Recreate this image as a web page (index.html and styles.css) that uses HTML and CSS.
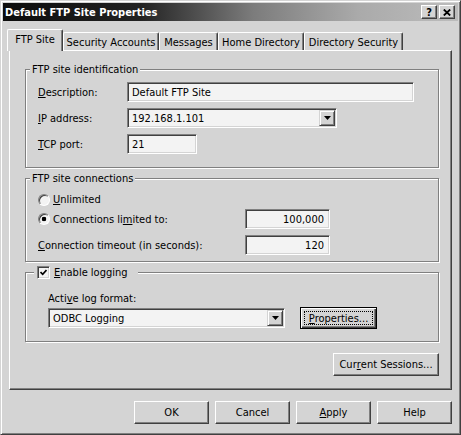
FILE: index.html
```html
<!DOCTYPE html>
<html lang="en">
<head>
    <meta charset="UTF-8">
    <title>Default FTP Site Properties</title>
    <link rel="stylesheet" href="styles.css">
</head>
<body>
    <div class="window">
        <div class="titlebar">
            <span class="title">Default FTP Site Properties</span>
            <div class="caption-buttons">
                <span class="cap-btn">?</span>
                <span class="cap-btn">
                    <svg width="8" height="7" viewBox="0 0 8 7"><path d="M0.8 0.5 L7.2 6.5 M7.2 0.5 L0.8 6.5" stroke="#000" stroke-width="1.8" fill="none"/></svg>
                </span>
            </div>
        </div>

        <div class="tabs">
            <div class="tab active tab-ftp">FTP Site</div>
            <div class="tab tab-sec">Security Accounts</div>
            <div class="tab tab-msg">Messages</div>
            <div class="tab tab-home">Home Directory</div>
            <div class="tab tab-dir">Directory Security</div>
        </div>

        <div class="panel">
            <div class="group group-ident">
                <div class="group-title">FTP site identification</div>
                <div class="rows">
                    <div class="row">
                        <span class="lbl"><u>D</u>escription:</span>
                        <div class="field w-desc">Default FTP Site</div>
                    </div>
                    <div class="row">
                        <span class="lbl"><u>I</u>P address:</span>
                        <div class="field select w-ip">
                            <span class="select-text">192.168.1.101</span>
                            <span class="drop-btn"><svg width="7" height="4" viewBox="0 0 7 4"><path d="M0 0 H7 L3.5 4 Z" fill="#000"/></svg></span>
                        </div>
                    </div>
                    <div class="row">
                        <span class="lbl"><u>T</u>CP port:</span>
                        <div class="field w-port">21</div>
                    </div>
                </div>
            </div>

            <div class="group group-conn">
                <div class="group-title">FTP site connections</div>
                <div class="conn-grid">
                    <div class="option option-first">
                        <span class="radio"></span>
                        <span><u>U</u>nlimited</span>
                    </div>
                    <div></div>
                    <div class="option">
                        <span class="radio checked"></span>
                        <span>Connections li<u>m</u>ited to:</span>
                    </div>
                    <div class="field num">100,000</div>
                    <div class="option option-last"><span><u>C</u>onnection timeout (in seconds):</span></div>
                    <div class="field num option-last">120</div>
                </div>
            </div>

            <div class="group group-log">
                <div class="group-title log-title">
                    <span class="checkbox">
                        <svg width="7" height="7" viewBox="0 0 7 7"><path d="M0.5 3 L2.7 5.3 L6.5 1" stroke="#000" stroke-width="1.7" fill="none"/></svg>
                    </span>
                    <span><u>E</u>nable logging</span>
                </div>
                <div class="log-body">
                    <div class="log-label">Acti<u>v</u>e log format:</div>
                    <div class="log-row">
                        <div class="field select w-log">
                            <span class="select-text">ODBC Logging</span>
                            <span class="drop-btn"><svg width="7" height="4" viewBox="0 0 7 4"><path d="M0 0 H7 L3.5 4 Z" fill="#000"/></svg></span>
                        </div>
                        <button class="btn btn-default btn-props"><span class="focus"><u>P</u>roperties...</span></button>
                    </div>
                </div>
            </div>

            <div class="sessions">
                <button class="btn btn-sessions">Cur<u>r</u>ent Sessions...</button>
            </div>
        </div>

        <div class="footer">
            <button class="btn btn-foot">OK</button>
            <button class="btn btn-foot">Cancel</button>
            <button class="btn btn-foot"><u>A</u>pply</button>
            <button class="btn btn-foot">Help</button>
        </div>
    </div>
</body>
</html>
```

FILE: styles.css
```css
* {
    margin: 0;
    padding: 0;
    box-sizing: border-box;
}

body {
    font-family: "DejaVu Sans Condensed", "DejaVu Sans", sans-serif;
    font-stretch: condensed;
    font-size: 11px;
    line-height: 13px;
    color: #000;
    background-color: #d4d4d4;
}

u {
    text-underline-offset: 1px;
}

.window {
    width: 461px;
    height: 435px;
    display: flex;
    flex-direction: column;
    background-color: #d4d4d4;
    border: 1px solid;
    border-color: #d4d4d4 #404040 #404040 #d4d4d4;
    box-shadow: inset 1px 1px 0 #fff, inset -1px -1px 0 #808080;
    padding: 2px;
}

/* title bar */
.titlebar {
    height: 18px;
    display: flex;
    align-items: center;
    justify-content: space-between;
    padding: 0 3px 0 2px;
    background: linear-gradient(to right, #0c0c0c 0%, #222 30%, #7c7c7c 55%, #aaa 78%, #bcbcbc 100%);
}

.title {
    color: #fff;
    font-weight: bold;
}

.caption-buttons {
    display: flex;
    gap: 2px;
}

.cap-btn {
    width: 16px;
    height: 14px;
    display: flex;
    align-items: center;
    justify-content: center;
    background-color: #d4d4d4;
    border: 1px solid;
    border-color: #fff #404040 #404040 #fff;
    box-shadow: inset -1px -1px 0 #808080;
    font-weight: bold;
    font-size: 11px;
}

/* tabs */
.tabs {
    height: 21px;
    margin-top: 8px;
    padding-left: 4px;
    display: flex;
    align-items: flex-end;
}

.tab {
    height: 18px;
    padding-top: 3px;
    text-align: center;
    white-space: nowrap;
    background-color: #d4d4d4;
    border-top: 1px solid #fff;
    border-left: 1px solid #fff;
    border-right: 1px solid #404040;
    box-shadow: inset -1px 0 0 #808080;
    border-radius: 2px 2px 0 0;
}

.tab.active {
    height: 22px;
    margin-bottom: -1px;
    position: relative;
    z-index: 1;
}

.tab-ftp { width: 56px; }
.tab-sec { width: 96px; }
.tab-msg { width: 59px; }
.tab-home { width: 86px; }
.tab-dir { width: 99px; }

/* tab page */
.panel {
    height: 340px;
    margin: 0 6px;
    padding: 18px 12px 0 15px;
    border: 1px solid;
    border-color: #fff #404040 #404040 #fff;
    box-shadow: inset -1px -1px 0 #808080;
}

.group {
    border: 1px solid #808080;
    box-shadow: inset 1px 1px 0 #fff, 1px 1px 0 #fff;
    padding: 0 10px 0 4px;
}

.group-title {
    display: flex;
    align-items: center;
    width: fit-content;
    height: 13px;
    margin-top: -7px;
    padding: 0 2px;
    background-color: #d4d4d4;
}

.group-ident {
    padding-bottom: 13px;
}

.rows {
    margin-top: 6px;
    padding-left: 8px;
    display: flex;
    flex-direction: column;
    gap: 6px;
}

.row {
    display: flex;
    align-items: center;
}

.lbl {
    width: 89px;
}

/* sunken edit fields */
.field {
    height: 20px;
    display: flex;
    align-items: center;
    padding: 1px 4px;
    background-color: #f3f3f3;
    border: 1px solid;
    border-color: #808080 #fff #fff #808080;
    box-shadow: inset 1px 1px 0 #404040, inset -1px -1px 0 #d4d4d4;
    white-space: nowrap;
}

.w-desc { width: 287px; }
.w-ip { width: 210px; }
.w-port { width: 70px; }
.w-log { width: 237px; }

.field.num {
    width: 85px;
    justify-content: flex-end;
    padding-right: 5px;
}

.field.select {
    padding-right: 1px;
}

.select-text {
    flex: 1;
}

.drop-btn {
    width: 16px;
    height: 16px;
    display: flex;
    align-items: center;
    justify-content: center;
    background-color: #d4d4d4;
    border: 1px solid;
    border-color: #d4d4d4 #404040 #404040 #d4d4d4;
    box-shadow: inset 1px 1px 0 #fff, inset -1px -1px 0 #808080;
}

/* connections group */
.group-conn {
    margin-top: 10px;
    padding-bottom: 6px;
}

.conn-grid {
    margin-top: 5px;
    padding-left: 8px;
    display: grid;
    grid-template-columns: 207px 85px;
    align-items: center;
}

.option {
    height: 20px;
    display: flex;
    align-items: center;
    gap: 3px;
}

.option-first {
    height: 19px;
}

.option-last {
    margin-top: 6px;
}

.radio {
    width: 12px;
    height: 12px;
    border-radius: 50%;
    border: 1px solid;
    border-color: #808080 #fff #fff #808080;
    box-shadow: inset 1px 1px 0 #404040;
    background-color: #f3f3f3;
}

.radio.checked {
    background: radial-gradient(circle, #000 0 2px, #f3f3f3 2.6px);
}

/* logging group */
.group-log {
    margin-top: 10px;
    padding-bottom: 12px;
}

.log-title {
    margin-left: 4px;
    padding: 0 10px 0 3px;
    gap: 4px;
}

.checkbox {
    width: 13px;
    height: 13px;
    display: flex;
    align-items: center;
    justify-content: center;
    background-color: #f3f3f3;
    border: 1px solid;
    border-color: #808080 #fff #fff #808080;
    box-shadow: inset 1px 1px 0 #404040, inset -1px -1px 0 #d4d4d4;
}

.log-body {
    padding-left: 18px;
}

.log-label {
    margin-top: 13px;
}

.log-row {
    margin-top: 2px;
    display: flex;
    align-items: center;
    gap: 15px;
}

/* buttons */
.btn {
    font: inherit;
    color: #000;
    height: 23px;
    display: flex;
    align-items: center;
    justify-content: center;
    background-color: #d4d4d4;
    border: 1px solid;
    border-color: #fff #404040 #404040 #fff;
    box-shadow: inset -1px -1px 0 #808080;
    cursor: default;
}

.btn-default {
    border: 1px solid #000;
    box-shadow: inset 1px 1px 0 #fff, inset -1px -1px 0 #404040, inset -2px -2px 0 #808080;
    padding: 3px;
}

.btn-props {
    width: 77px;
    height: 22px;
}

.focus {
    width: 100%;
    height: 100%;
    display: flex;
    align-items: center;
    justify-content: center;
    border: 1px dotted #000;
}

.sessions {
    margin-top: 11px;
    display: flex;
    justify-content: flex-end;
}

.btn-sessions {
    width: 106px;
}

.footer {
    margin-top: 11px;
    padding-right: 6px;
    display: flex;
    justify-content: flex-end;
    gap: 6px;
}

.btn-foot {
    width: 75px;
}
```
